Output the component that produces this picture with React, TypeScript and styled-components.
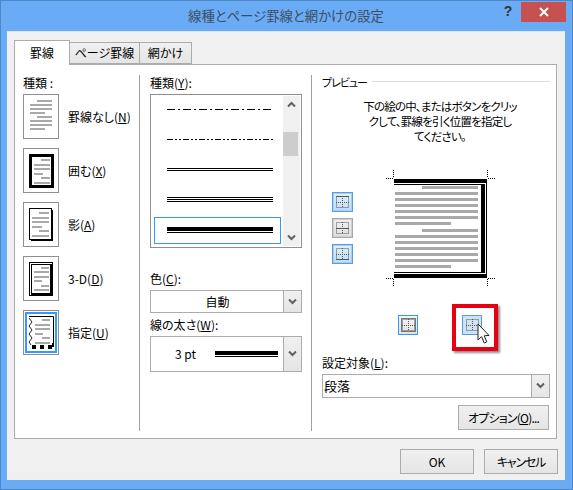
import React from "react";
import styled, { createGlobalStyle, css } from "styled-components";

const Global = createGlobalStyle`
  html, body { margin: 0; padding: 0; background: #6aabf5; }
  body {
    font-family: "Noto Sans CJK JP", "Noto Sans", sans-serif;
    font-size: 12px;
    color: #000;
    font-feature-settings: "palt";
  }
`;

const Win = styled.div`
  width: 573px;
  height: 490px;
  box-sizing: border-box;
  background: #6aabf5;
  border: 1px solid #4f86c6;
  display: flex;
  flex-direction: column;
`;
const TitleBar = styled.div`
  height: 29.5px;
  flex: none;
  display: flex;
  align-items: flex-start;
  position: relative;
`;
const Title = styled.div`
  position: absolute;
  left: 187px;
  top: 4px;
  font-size: 13.4px;
  line-height: 20px;
  color: #3c4f62;
  white-space: nowrap;
`;
const Help = styled.div`
  margin-left: auto;
  margin-top: 1px;
  width: 14px;
  font: 700 14px/18px "Liberation Sans", sans-serif;
  color: #333;
  text-align: center;
`;
const Close = styled.div`
  margin: 1px 6px 0 6px;
  width: 45px;
  height: 20px;
  background: #c75050;
  display: flex;
  align-items: center;
  justify-content: center;
`;
const Body = styled.div`
  flex: 1;
  margin: 0 7px 9px 6px;
  background: #f0f0f0;
  border-top: 1px solid #dbe6f2;
  padding: 8px 8px 0 7px;
  display: flex;
  flex-direction: column;
`;
const Tabs = styled.div`
  display: flex;
  height: 24px;
  align-items: flex-end;
  flex: none;
`;
const Tab = styled.div<{ $active?: boolean }>`
  box-sizing: border-box;
  display: flex;
  align-items: center;
  justify-content: center;
  border: 1px solid #acacac;
  ${(p) =>
    p.$active
      ? css`
          width: 56px;
          height: 25px;
          background: #fff;
          border-bottom: 0;
          position: relative;
          z-index: 1;
          margin-bottom: -1px;
        `
      : css`
          height: 22px;
          margin-left: -1px;
          background: linear-gradient(#f0f0f0, #e5e5e5);
        `}
`;
const TabLabel = styled.span<{ $w: number }>`
  width: ${(p) => p.$w}px;
  text-align: center;
  line-height: 16px;
  white-space: nowrap;
`;
const Panel = styled.div`
  box-sizing: border-box;
  height: 375px;
  background: #fff;
  border: 1px solid #acacac;
  padding: 10px 0 7px;
  display: flex;
  flex: none;
`;
const Col1 = styled.div`
  width: 125px;
  flex: none;
  box-sizing: border-box;
  padding-left: 8px;
  border-right: 1px solid #a0a0a0;
`;
const Col2 = styled.div`
  width: 172px;
  flex: none;
  box-sizing: border-box;
  padding-left: 10px;
  border-right: 1px solid #a0a0a0;
  display: flex;
  flex-direction: column;
`;
const Col3 = styled.div`
  flex: 1;
  min-width: 0;
  padding: 0 6px 0 10px;
  display: flex;
  flex-direction: column;
`;
const Label = styled.div<{ $top?: number }>`
  height: 19px;
  line-height: 16px;
  margin-top: ${(p) => p.$top ?? 0}px;
  white-space: nowrap;
  flex: none;
`;
const Key = styled.span`
  text-decoration: underline;
`;
const Presets = styled.div`
  display: flex;
  flex-direction: column;
  gap: 9px;
`;
const Preset = styled.div`
  display: flex;
  align-items: center;
  gap: 9px;
  height: 45px;
  white-space: nowrap;
`;
const PresetBox = styled.div`
  box-sizing: border-box;
  width: 36px;
  height: 45px;
  border: 1px solid #8e8f93;
  background: #fff;
  flex: none;
`;
const ListBox = styled.div`
  box-sizing: border-box;
  width: 152px;
  height: 154px;
  border: 1px solid #8e8f93;
  display: flex;
  flex: none;
  padding: 0 1px;
`;
const ListItems = styled.div`
  flex: 1;
  padding: 0 2px;
  display: flex;
  flex-direction: column;
`;
const ListItem = styled.div<{ $selected?: boolean }>`
  box-sizing: border-box;
  height: 30px;
  display: flex;
  align-items: center;
  justify-content: center;
  padding-left: 5px;
  border: 1px solid ${(p) => (p.$selected ? "#3399ff" : "transparent")};
  ${(p) => p.$selected && css`margin-top: 2px; height: 27px;`}
`;
const Scroll = styled.div`
  width: 17px;
  margin: 1px 0;
  background: #f0f0f0;
  display: flex;
  flex-direction: column;
  align-items: center;
  flex: none;
`;
const ArrowCell = styled.div`
  height: 17px;
  flex: none;
  display: flex;
  align-items: center;
  justify-content: center;
`;
const Thumb = styled.div`
  width: 15px;
  height: 24px;
  margin-top: 19px;
  margin-left: -2px;
  margin-bottom: auto;
  background: #cdcdcd;
`;
const Select = styled.div<{ $h: number; $w?: number }>`
  box-sizing: border-box;
  width: ${(p) => p.$w ?? 152}px;
  height: ${(p) => p.$h}px;
  border: 1px solid #acacac;
  display: flex;
  flex: none;
  background: #fff;
`;
const SelectValue = styled.div<{ $center?: boolean }>`
  flex: 1;
  display: flex;
  align-items: center;
  padding-left: ${(p) => (p.$center ? 1 : 1)}px;
  justify-content: ${(p) => (p.$center ? "center" : "flex-start")};
  font-size: ${(p) => (p.$center ? 12 : 13)}px;
`;
const WeightValue = styled.div`
  flex: 1;
  display: flex;
  align-items: center;
  padding-left: 24px;
  gap: 19px;
  font-size: 12px;
`;
const DropBtn = styled.div`
  width: 17px;
  flex: none;
  border-left: 1px solid #acacac;
  background: linear-gradient(#f0f0f0, #e5e5e5);
  display: flex;
  align-items: center;
  justify-content: center;
`;
const Legend = styled.div`
  display: flex;
  align-items: center;
  height: 14px;
  gap: 5px;
  flex: none;
  font-size: 11px;
  letter-spacing: -1px;
`;
const LegendLine = styled.div`
  flex: 1;
  height: 1px;
  background: #dcdcdc;
`;
const Desc = styled.div`
  margin-top: 10px;
  height: 45px;
  line-height: 15px;
  font-size: 11.5px;
  letter-spacing: -0.8px;
  text-align: center;
  padding-left: 8px;
  flex: none;
`;
const PreviewRow = styled.div`
  margin-top: 25px;
  display: flex;
  flex: none;
  padding-left: 10px;
  gap: 33px;
`;
const SideButtons = styled.div`
  display: flex;
  flex-direction: column;
  gap: 6px;
  margin-top: 23px;
`;
const EdgeBtn = styled.div<{ $tone: "on" | "off" | "focus" | "hover"; $small?: boolean }>`
  box-sizing: border-box;
  width: ${(p) => (p.$small ? 20 : 21)}px;
  height: 20px;
  display: flex;
  align-items: center;
  justify-content: center;
  ${(p) =>
    p.$tone === "on" &&
    css`
      border: 1px solid #5a9be0;
      box-shadow: inset 0 0 0 1px #a8cff2;
      background: linear-gradient(#e2f0fc, #bcdcf8);
    `}
  ${(p) =>
    p.$tone === "off" &&
    css`
      border: 1px solid #a8a8a8;
      box-shadow: inset 0 0 0 1px #cfcfcf;
      background: linear-gradient(#f2f2f2, #dedede);
    `}
  ${(p) =>
    p.$tone === "focus" &&
    css`
      border: 1px solid #3399ff;
      background: linear-gradient(#f4f4f4, #e2e2e2);
    `}
  ${(p) =>
    p.$tone === "hover" &&
    css`
      border: 1px solid #5a9be0;
      background: #cfe3f7;
    `}
`;
const BottomButtons = styled.div`
  margin-top: 27px;
  padding-left: 76px;
  display: flex;
  gap: 44px;
  flex: none;
`;
const Highlighted = styled.div`
  position: relative;
`;
const RedBox = styled.div`
  position: absolute;
  left: -10px;
  top: -11px;
  width: 46px;
  height: 47px;
  box-sizing: border-box;
  border: 4px solid #e60012;
  box-shadow: 2px 2px 2px rgba(0, 0, 0, 0.45);
  pointer-events: none;
`;
const Cursor = styled.svg`
  position: absolute;
  left: 15px;
  top: 8px;
`;
const OptionRow = styled.div`
  margin-top: 7px;
  display: flex;
  justify-content: flex-end;
  padding-right: 1px;
  flex: none;
`;
const Btn = styled.div<{ $w: number; $track?: number }>`
  box-sizing: border-box;
  width: ${(p) => p.$w}px;
  height: 25px;
  border: 1px solid #acacac;
  background: linear-gradient(#f0f0f0, #e5e5e5);
  display: flex;
  align-items: center;
  justify-content: center;
  white-space: nowrap;
  letter-spacing: ${(p) => p.$track ?? 0}px;
`;
const Footer = styled.div`
  margin-top: 10px;
  margin-right: -1px;
  display: flex;
  justify-content: flex-end;
  gap: 10px;
  flex: none;
`;

const Chevron = ({ up }: { up?: boolean }) => (
  <svg width="9" height="7" viewBox="0 0 9 7">
    <path
      d={up ? "M1 5.5 L4.5 2 L8 5.5" : "M1 1.5 L4.5 5 L8 1.5"}
      fill="none"
      stroke="#606060"
      strokeWidth="2"
    />
  </svg>
);

const DocLines = ({ x0, x1, y0, gap, n }: { x0: number; x1: number; y0: number; gap: number; n: number }) => {
  const indent = 7;
  const out: React.ReactNode[] = [];
  for (let i = 0; i < n; i++) {
    const m = i % 4;
    const a = m === 0 ? x0 + indent : x0;
    const b = m === 3 ? x1 - indent : x1;
    out.push(<rect key={i} x={a} y={Math.round(y0 + i * gap)} width={b - a} height={2} fill="#a9a9a9" />);
  }
  return <>{out}</>;
};

const IconNone = () => (
  <svg width="34" height="43" viewBox="1 1 34 43">
    <DocLines x0={7} x1={29} y0={6} gap={4} n={8} />
  </svg>
);
const IconBox = () => (
  <svg width="34" height="43" viewBox="1 1 34 43">
    <rect x="7.5" y="7.5" width="22" height="31" fill="none" stroke="#000" strokeWidth="3" />
    <DocLines x0={11} x1={27} y0={11} gap={4.6} n={6} />
  </svg>
);
const IconShadow = () => (
  <svg width="34" height="43" viewBox="1 1 34 43">
    <rect x="6.5" y="6.5" width="22" height="31" fill="none" stroke="#000" strokeWidth="1" />
    <rect x="28" y="8" width="2" height="31" fill="#000" />
    <rect x="8" y="37" width="22" height="2" fill="#000" />
    <DocLines x0={9} x1={26} y0={10} gap={4.6} n={6} />
  </svg>
);
const Icon3D = () => (
  <svg width="34" height="43" viewBox="1 1 34 43">
    <rect x="6.5" y="6.5" width="23" height="33" fill="none" stroke="#000" strokeWidth="1" />
    <rect x="8.5" y="8.5" width="19" height="29" fill="none" stroke="#000" strokeWidth="1" />
    <rect x="28" y="8" width="2" height="31" fill="#000" />
    <rect x="8" y="37" width="22" height="2" fill="#000" />
    <DocLines x0={11} x1={26} y0={11} gap={4.4} n={6} />
  </svg>
);
const IconCustom = () => (
  <svg width="34" height="43" viewBox="1 1 34 43">
    <rect x="3" y="3" width="30" height="39" fill="none" stroke="#3399ff" strokeWidth="2" />
    <path d="M6 6.5 H30.5 V37" fill="none" stroke="#000" strokeWidth="1" />
    <path d="M6 8 L9 12 L6 16 L9 20 L6 24 L9 28 L6 32 L8 35" fill="none" stroke="#222" strokeWidth="1" />
    <DocLines x0={12} x1={27} y0={9} gap={4.5} n={6} />
    <rect x="9" y="35" width="4" height="4" fill="#000" />
    <rect x="17" y="35" width="4" height="4" fill="#000" />
    <rect x="25" y="35" width="4" height="4" fill="#000" />
    <rect x="29" y="33" width="2" height="4" fill="#000" />
  </svg>
);

const LineDashDot = () => (
  <svg width="106" height="1" viewBox="0 0 106 1">
    <line x1="0" y1="0.5" x2="104" y2="0.5" stroke="#000" strokeWidth="1" strokeDasharray="8 3 2 3" />
  </svg>
);
const LineDashDotDot = () => (
  <svg width="106" height="1" viewBox="0 0 106 1">
    <line x1="0" y1="0.5" x2="106" y2="0.5" stroke="#000" strokeWidth="1" strokeDasharray="6 2 2 2 2 2" />
  </svg>
);
const Stack = ({ w, items }: { w: number; items: [number, number][] }) => {
  const h = items.reduce((m, [y, t]) => Math.max(m, y + t), 0);
  return (
    <svg width={w} height={h} viewBox={`0 0 ${w} ${h}`}>
      {items.map(([y, t], i) => (
        <rect key={i} x="0" y={y} width={w} height={t} fill="#000" />
      ))}
    </svg>
  );
};

type Edge = "top" | "mid" | "bottom" | "none";
const GridGlyph = ({ solid, frame }: { solid: Edge; frame?: boolean }) => (
  <svg width="15" height="14" viewBox="0 0 15 14">
    <rect x="1.5" y="1.5" width="12" height="11" fill="none" stroke="#555" strokeDasharray="1 1" />
    <line x1="7.5" y1="1" x2="7.5" y2="13" stroke="#555" strokeDasharray="1 1" />
    <line x1="1" y1="7.5" x2="14" y2="7.5" stroke="#555" strokeDasharray="1 1" />
    {solid === "top" && <line x1="1" y1="1.5" x2="14" y2="1.5" stroke="#555" />}
    {solid === "mid" && <line x1="1" y1="7.5" x2="14" y2="7.5" stroke="#555" />}
    {solid === "bottom" && <line x1="1" y1="12.5" x2="14" y2="12.5" stroke="#555" />}
    {frame && <rect x="0.5" y="0.5" width="14" height="13" fill="none" stroke="#000" strokeDasharray="1 1" />}
  </svg>
);

const textRows: [number, number, number][] = [
  [185, 422, 478],
  [191, 395, 478],
  [197, 395, 478],
  [203, 395, 478],
  [209, 395, 478],
  [215, 395, 478],
  [221, 395, 451],
  [228, 422, 478],
  [234, 395, 478],
  [240, 395, 478],
  [246, 395, 478],
  [252, 395, 478],
  [258, 395, 478],
  [264, 395, 451],
];

const PagePreview = () => (
  <svg width="110" height="119" viewBox="386 168 110 119">
    <g stroke="#000" strokeDasharray="1 1" strokeWidth="1">
      <line x1="393.5" y1="169" x2="393.5" y2="177" />
      <line x1="386" y1="177.5" x2="393" y2="177.5" />
      <line x1="487.5" y1="169" x2="487.5" y2="177" />
      <line x1="488" y1="177.5" x2="495" y2="177.5" />
      <line x1="386" y1="277.5" x2="393" y2="277.5" />
      <line x1="393.5" y1="278" x2="393.5" y2="286" />
      <line x1="488" y1="277.5" x2="495" y2="277.5" />
      <line x1="487.5" y1="278" x2="487.5" y2="286" />
    </g>
    <rect x="394" y="178" width="93" height="4" fill="#000" />
    <rect x="394" y="183" width="87" height="1" fill="#000" />
    <rect x="481" y="183" width="4" height="89" fill="#000" />
    <rect x="486" y="178" width="1" height="99" fill="#000" />
    <rect x="394" y="271" width="87" height="1" fill="#000" />
    <rect x="394" y="273" width="93" height="4" fill="#000" />
    {textRows.map(([y, a, b]) => (
      <rect key={y} x={a} y={y} width={b - a} height={3} fill="#a9a9a9" />
    ))}
  </svg>
);

export default function App() {
  return (
    <>
      <Global />
      <Win>
        <TitleBar>
          <Title>線種とページ罫線と網かけの設定</Title>
          <Help>?</Help>
          <Close>
            <svg width="10" height="10" viewBox="0 0 10 10">
              <path d="M1 1 L9 9 M9 1 L1 9" stroke="#fff" strokeWidth="2" />
            </svg>
          </Close>
        </TitleBar>
        <Body>
          <Tabs>
            <Tab $active>
              <TabLabel $w={54}>罫線</TabLabel>
            </Tab>
            <Tab>
              <TabLabel $w={69}>ページ罫線</TabLabel>
            </Tab>
            <Tab>
              <TabLabel $w={51}>網かけ</TabLabel>
            </Tab>
          </Tabs>
          <Panel>
            <Col1>
              <Label>種類 :</Label>
              <Presets>
                <Preset>
                  <PresetBox><IconNone /></PresetBox>
                  <span>罫線なし(<Key>N</Key>)</span>
                </Preset>
                <Preset>
                  <PresetBox><IconBox /></PresetBox>
                  <span>囲む(<Key>X</Key>)</span>
                </Preset>
                <Preset>
                  <PresetBox><IconShadow /></PresetBox>
                  <span>影(<Key>A</Key>)</span>
                </Preset>
                <Preset>
                  <PresetBox><Icon3D /></PresetBox>
                  <span>3-D(<Key>D</Key>)</span>
                </Preset>
                <Preset>
                  <PresetBox><IconCustom /></PresetBox>
                  <span>指定(<Key>U</Key>)</span>
                </Preset>
              </Presets>
            </Col1>
            <Col2>
              <Label>種類(<Key>Y</Key>):</Label>
              <ListBox>
                <ListItems>
                  <ListItem><LineDashDot /></ListItem>
                  <ListItem><LineDashDotDot /></ListItem>
                  <ListItem><Stack w={106} items={[[0, 1], [2, 1]]} /></ListItem>
                  <ListItem><Stack w={106} items={[[0, 1], [2, 1], [4, 1]]} /></ListItem>
                  <ListItem $selected><Stack w={106} items={[[0, 4], [5, 1]]} /></ListItem>
                </ListItems>
                <Scroll>
                  <ArrowCell><Chevron up /></ArrowCell>
                  <Thumb />
                  <ArrowCell><Chevron /></ArrowCell>
                </Scroll>
              </ListBox>
              <Label $top={23}>色(<Key>C</Key>):</Label>
              <Select $h={23}>
                <SelectValue $center>自動</SelectValue>
                <DropBtn><Chevron /></DropBtn>
              </Select>
              <Label $top={4}>線の太さ(<Key>W</Key>):</Label>
              <Select $h={36}>
                <WeightValue>
                  <span>3 pt</span>
                  <Stack w={63} items={[[0, 4], [5, 1]]} />
                </WeightValue>
                <DropBtn><Chevron /></DropBtn>
              </Select>
            </Col2>
            <Col3>
              <Legend>
                <span>プレビュー</span>
                <LegendLine />
              </Legend>
              <Desc>
                下の絵の中、またはボタンをクリッ<br />
                クして、罫線を引く位置を指定し<br />
                てください。
              </Desc>
              <PreviewRow>
                <SideButtons>
                  <EdgeBtn $tone="on"><GridGlyph solid="top" /></EdgeBtn>
                  <EdgeBtn $tone="off"><GridGlyph solid="mid" /></EdgeBtn>
                  <EdgeBtn $tone="on"><GridGlyph solid="bottom" /></EdgeBtn>
                </SideButtons>
                <PagePreview />
              </PreviewRow>
              <BottomButtons>
                <EdgeBtn $tone="focus" $small><GridGlyph solid="none" frame /></EdgeBtn>
                <Highlighted>
                  <EdgeBtn $tone="hover" $small><GridGlyph solid="none" /></EdgeBtn>
                  <RedBox />
                  <Cursor width="13" height="22" viewBox="0 0 13 22">
                    <path
                      d="M1 1 V17 L4.6 13.6 L7.2 20 L9.8 18.9 L7.2 12.8 L12 12.4 Z"
                      fill="#fff"
                      stroke="#222"
                      strokeWidth="1"
                    />
                  </Cursor>
                </Highlighted>
              </BottomButtons>
              <Label $top={20}>設定対象(<Key>L</Key>):</Label>
              <Select $h={24} $w={228}>
                <SelectValue>段落</SelectValue>
                <DropBtn><Chevron /></DropBtn>
              </Select>
              <OptionRow>
                <Btn $w={91} $track={-0.8}>オプション(<Key>O</Key>)...</Btn>
              </OptionRow>
            </Col3>
          </Panel>
          <Footer>
            <Btn $w={74}>OK</Btn>
            <Btn $w={74} $track={-1.2}>キャンセル</Btn>
          </Footer>
        </Body>
      </Win>
    </>
  );
}
